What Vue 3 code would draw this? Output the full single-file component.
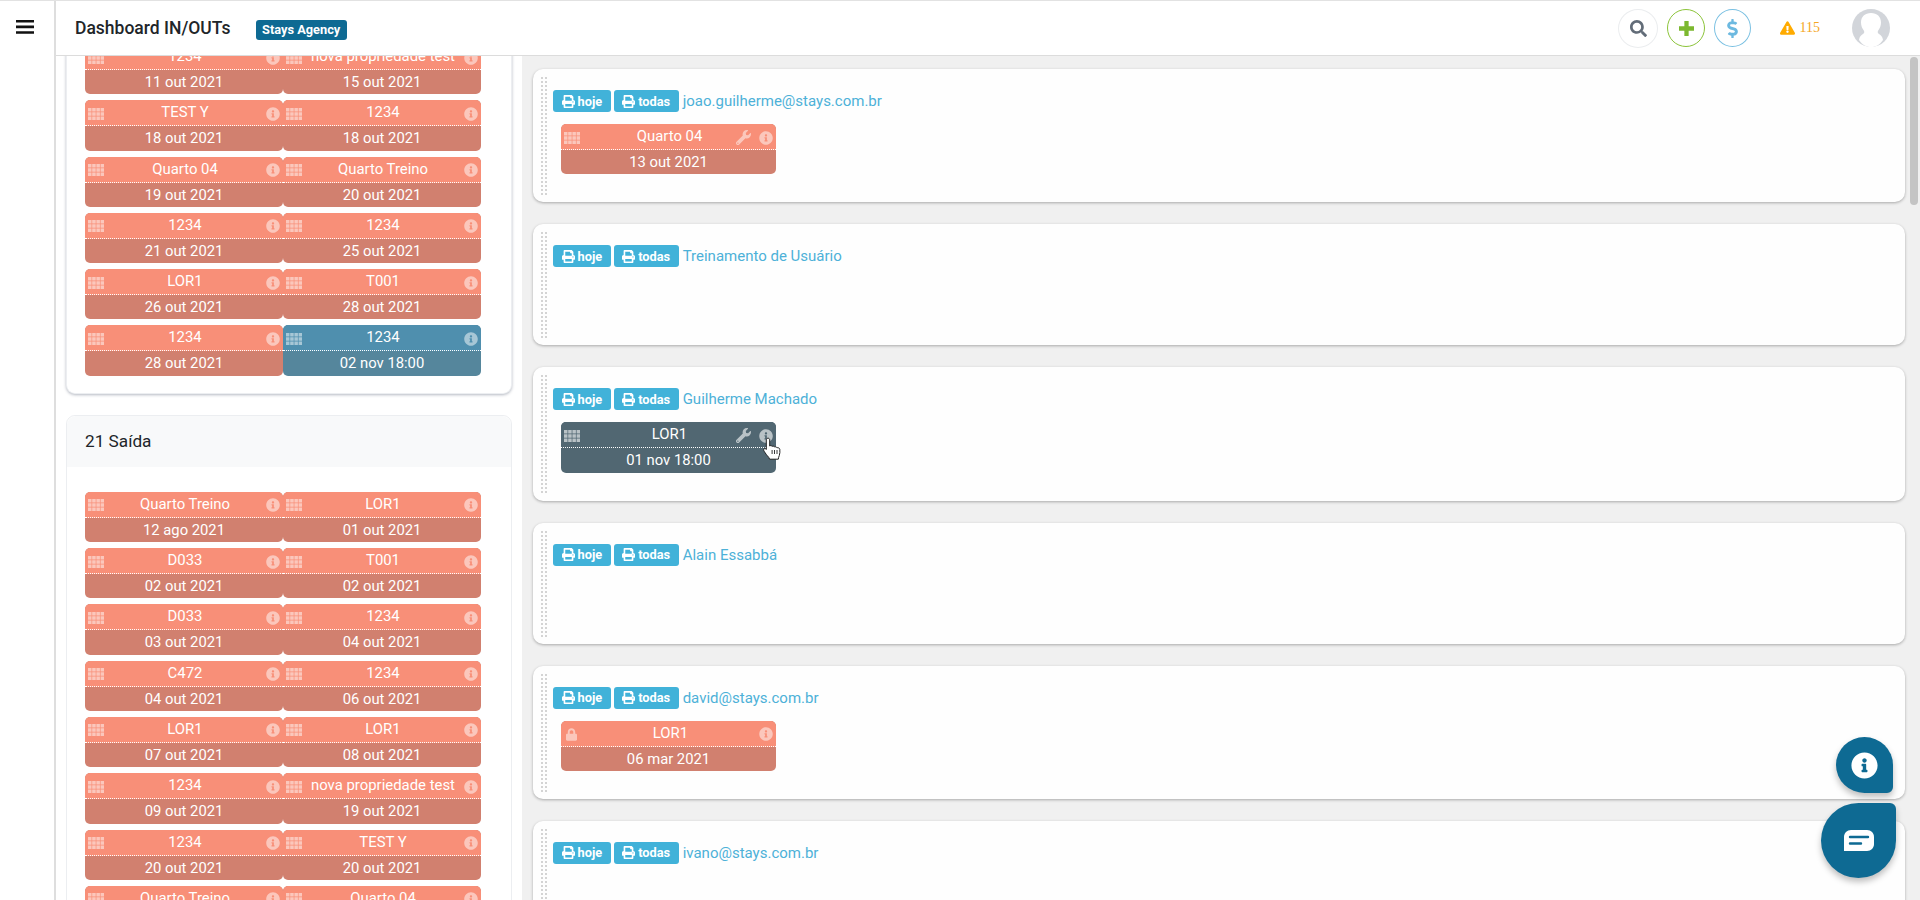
<template>
  <div class="page">
    <svg class="defs" aria-hidden="true">
      <symbol id="i-info" viewBox="0 0 512 512"><path d="M256 8C119.043 8 8 119.083 8 256c0 136.997 111.043 248 248 248s248-111.003 248-248C504 119.083 392.957 8 256 8zm0 110c23.196 0 42 18.804 42 42s-18.804 42-42 42-42-18.804-42-42 18.804-42 42-42zm56 254c0 6.627-5.373 12-12 12h-88c-6.627 0-12-5.373-12-12v-24c0-6.627 5.373-12 12-12h12v-64h-12c-6.627 0-12-5.373-12-12v-24c0-6.627 5.373-12 12-12h64c6.627 0 12 5.373 12 12v100h12c6.627 0 12 5.373 12 12v24z" /></symbol>
      <symbol id="i-print" viewBox="0 0 512 512"><path d="M448 192V77.25c0-8.49-3.37-16.62-9.37-22.63L393.37 9.37c-6-6-14.14-9.37-22.63-9.37H96C78.33 0 64 14.33 64 32v160c-35.35 0-64 28.65-64 64v112c0 8.84 7.16 16 16 16h48v96c0 17.67 14.33 32 32 32h320c17.67 0 32-14.33 32-32v-96h48c8.84 0 16-7.16 16-16V256c0-35.35-28.65-64-64-64zm-64 256H128v-96h256v96zm0-224H128V64h192v48c0 8.84 7.16 16 16 16h48v96zm48 72c-13.25 0-24-10.75-24-24 0-13.26 10.75-24 24-24s24 10.74 24 24c0 13.25-10.75 24-24 24z" /></symbol>
      <symbol id="i-wrench" viewBox="0 0 512 512"><path d="M507.73 109.1c-2.24-9.03-13.54-12.09-20.12-5.51l-74.36 74.36-67.88-11.31-11.31-67.88 74.36-74.36c6.62-6.62 3.43-17.9-5.66-20.16-47.38-11.74-99.55.91-136.58 37.93-39.64 39.64-50.55 97.1-34.05 147.2L18.74 402.76c-24.99 24.99-24.99 65.51 0 90.5 24.99 24.99 65.51 24.99 90.5 0l213.21-213.21c50.12 16.71 107.47 5.68 147.37-34.22 37.07-37.07 49.7-89.32 37.91-136.73zM64 472c-13.25 0-24-10.75-24-24 0-13.26 10.75-24 24-24s24 10.74 24 24c0 13.25-10.75 24-24 24z" /></symbol>
      <symbol id="i-lock" viewBox="0 0 448 512"><path d="M400 224h-24v-72C376 68.2 307.8 0 224 0S72 68.2 72 152v72H48c-26.5 0-48 21.5-48 48v192c0 26.5 21.5 48 48 48h352c26.5 0 48-21.5 48-48V272c0-26.5-21.5-48-48-48zm-104 0H152v-72c0-39.7 32.3-72 72-72s72 32.3 72 72v72z" /></symbol>
      <symbol id="i-grid" viewBox="0 0 16 12"><path d="M0 0h3.500v3.500H0zM4.200 0h3.500v3.500H4.200zM8.400 0h3.500v3.500H8.400zM12.600 0H16v3.500h-3.400zM0 4.200h3.500v3.500H0zM4.200 4.200h3.500v3.500H4.200zM8.400 4.200h3.500v3.500H8.400zM12.600 4.200H16v3.500h-3.400zM0 8.400h3.500V12H0zM4.200 8.400h3.500V12H4.200zM8.400 8.400h3.500V12H8.400zM12.600 8.400H16V12h-3.400z" /></symbol>
    </svg>

    <aside class="sidebar">
      <svg class="bars" viewBox="0 0 18 14"><path d="M0 0h18v2.600H0zM0 5.600h18v2.600H0zM0 11.200h18v2.600H0z" /></svg>
    </aside>

    <div class="main">
      <header class="topbar">
        <h1 class="title">Dashboard IN/OUTs</h1>
        <span class="agency">Stays Agency</span>
        <div class="actions">
          <span class="round round-search">
            <svg viewBox="0 0 512 512" width="17" height="17"><path d="M505 442.7L405.3 343c-4.500-4.500-10.600-7-17-7H372c27.600-35.300 44-79.700 44-128C416 93.100 322.900 0 208 0S0 93.100 0 208s93.100 208 208 208c48.300 0 92.700-16.400 128-44v16.300c0 6.400 2.500 12.500 7 17l99.700 99.700c9.400 9.400 24.600 9.400 33.900 0l28.300-28.300c9.400-9.400 9.400-24.600.1-34zM208 336c-70.700 0-128-57.200-128-128 0-70.700 57.200-128 128-128 70.700 0 128 57.200 128 128 0 70.700-57.200 128-128 128z" /></svg>
          </span>
          <span class="round round-plus">
            <svg viewBox="0 0 14 14" width="15" height="15"><path d="M5 0h4v5h5v4H9v5H5V9H0V5h5z" /></svg>
          </span>
          <span class="round round-dollar">
            <svg viewBox="0 0 288 512" width="11" height="19"><path d="M209.2 233.4l-108-31.600C88.700 198.2 80 186.5 80 173.5c0-16.300 13.200-29.500 29.500-29.500h66.300c12.200 0 24.200 3.700 34.200 10.500 6.100 4.100 14.300 3.100 19.500-2l34.800-34c7.100-6.900 6.100-18.400-1.800-24.500C238 74.800 207.4 64.100 176 64V16c0-8.800-7.200-16-16-16h-32c-8.800 0-16 7.200-16 16v48h-2.500C45.800 64-5.400 118.700.5 183.600c4.200 46.100 39.400 83.600 83.800 96.600l102.500 30c12.500 3.700 21.200 15.300 21.200 28.300 0 16.300-13.200 29.500-29.500 29.500h-66.300C100 368 88 364.300 78 357.500c-6.100-4.100-14.300-3.100-19.500 2l-34.800 34c-7.100 6.900-6.100 18.400 1.800 24.500 24.500 19.200 55.100 29.900 86.500 30v48c0 8.800 7.200 16 16 16h32c8.800 0 16-7.200 16-16v-48.200c46.600-.9 90.300-28.600 105.700-72.700 21.500-61.600-14.600-124.800-72.500-141.700z" /></svg>
          </span>
          <span class="alert">
            <svg viewBox="0 0 576 512" width="15" height="14"><path d="M569.517 440.013C587.975 472.007 564.806 512 527.94 512H48.054c-36.937 0-59.999-40.055-41.577-71.987L246.423 23.985c18.467-32.009 64.72-31.951 83.154 0l239.94 416.028zM288 354c-25.405 0-46 20.595-46 46s20.595 46 46 46 46-20.595 46-46-20.595-46-46-46zm-43.673-165.346l7.418 136c.347 6.364 5.609 11.346 11.982 11.346h48.546c6.373 0 11.635-4.982 11.982-11.346l7.418-136c.375-6.874-5.098-12.654-11.982-12.654h-63.383c-6.884 0-12.356 5.78-11.981 12.654z" /></svg>
            115
          </span>
          <svg class="avatar" viewBox="0 0 38 38">
            <circle cx="19" cy="19" r="19" fill="#d2d5da" />
            <path d="M19 4c-6 0-10 3.800-10 9.500 0 3.300 1.200 6 2.800 8 .8 1.100.6 2.800-.8 3.500C9 26.300 7.500 27.500 7 31c3 4.500 7 7 12 7s9-2.500 12-7c-.5-3.500-2-4.700-4-6-1.400-.7-1.600-2.400-.8-3.500 1.600-2 2.800-4.700 2.800-8C29 7.800 25 4 19 4z" fill="#fff" />
          </svg>
        </div>
      </header>

      <div class="content">
        <section class="left">
          <div class="panel panel-in">
            <div class="panel-body">
              <div v-for="(row, i) in inRows" :key="i" class="pair">
                <div v-for="(b, j) in row" :key="j" class="item" :class="b.kind">
                  <div class="item-top">
                    <svg class="ic-grid"><use href="#i-grid" /></svg>
                    <span class="item-name">{{ b.name }}</span>
                    <svg class="ic-info"><use href="#i-info" /></svg>
                  </div>
                  <div class="item-date">{{ b.date }}</div>
                </div>
              </div>
            </div>
          </div>

          <div class="panel panel-out">
            <div class="panel-head">21 Saída</div>
            <div class="panel-body">
              <div v-for="(row, i) in outRows" :key="i" class="pair">
                <div v-for="(b, j) in row" :key="j" class="item">
                  <div class="item-top">
                    <svg class="ic-grid"><use href="#i-grid" /></svg>
                    <span class="item-name">{{ b.name }}</span>
                    <svg class="ic-info"><use href="#i-info" /></svg>
                  </div>
                  <div class="item-date">{{ b.date }}</div>
                </div>
              </div>
            </div>
          </div>
        </section>

        <section class="right">
          <div v-for="u in users" :key="u.name" class="user-card">
            <div class="handle"></div>
            <div class="user-body">
              <div class="user-head">
                <button class="print-btn"><svg><use href="#i-print" /></svg>hoje</button>
                <button class="print-btn"><svg><use href="#i-print" /></svg>todas</button>
                <a class="user-name">{{ u.name }}</a>
              </div>
              <div v-if="u.item" class="item single" :class="u.item.kind">
                <div class="item-top">
                  <svg v-if="u.item.locked" class="ic-lock"><use href="#i-lock" /></svg>
                  <svg v-else class="ic-grid"><use href="#i-grid" /></svg>
                  <span class="item-name">{{ u.item.name }}</span>
                  <svg v-if="!u.item.locked" class="ic-wrench"><use href="#i-wrench" /></svg>
                  <svg class="ic-info"><use href="#i-info" /></svg>
                </div>
                <div class="item-date">{{ u.item.date }}</div>
                <svg v-if="u.item.kind === 'dark'" class="cursor" viewBox="0 0 18 23">
                  <path d="M5 1.200c1 0 1.700.8 1.700 1.800v6c.4-.5 1.900-.6 2.400.4.600-.5 2-.4 2.400.6.700-.4 2.100-.2 2.500.8.700-.3 2.500-.1 2.800 1.500.3 2 .1 4.500-.5 6.200-.4 1.300-1 2.300-1 3.700H6.600c-.3-1.400-1.300-2.400-2.300-3.500-1.200-1.400-3.300-4.400-3.600-5.400-.4-1.200.9-2.300 2.100-1.400l.5.500V3c0-1 .7-1.800 1.700-1.800z" fill="#fff" stroke="#222" stroke-width="1" />
                  <path d="M9.100 13v4M11.500 13v4M14 13v4" stroke="#222" stroke-width=".9" fill="none" />
                </svg>
              </div>
            </div>
          </div>
          <div class="scrollbar"></div>
        </section>
      </div>
    </div>

    <button class="fab fab-info">
      <svg width="27" height="27" fill="#fff"><use href="#i-info" /></svg>
    </button>
    <button class="fab fab-chat">
      <svg viewBox="0 0 30 22" width="30" height="22">
        <path d="M7 0h16c4 0 7 3 7 7v7c0 4-3 7-7 7H0V7c0-4 3-7 7-7z" fill="#fff" />
        <path d="M6 7h18M6 13.500h11" stroke="#0e6a93" stroke-width="2.400" stroke-linecap="round" />
      </svg>
    </button>
  </div>
</template>

<script setup>
const pairRows = list => list.map(([a, ad, b, bd]) => [{ name: a, date: ad }, { name: b, date: bd }])

const inRows = pairRows([
  ['1234', '11 out 2021', 'nova propriedade test', '15 out 2021'],
  ['TEST Y', '18 out 2021', '1234', '18 out 2021'],
  ['Quarto 04', '19 out 2021', 'Quarto Treino', '20 out 2021'],
  ['1234', '21 out 2021', '1234', '25 out 2021'],
  ['LOR1', '26 out 2021', 'T001', '28 out 2021'],
  ['1234', '28 out 2021', '1234', '02 nov 18:00']
])
inRows[5][1].kind = 'blue'

const outRows = pairRows([
  ['Quarto Treino', '12 ago 2021', 'LOR1', '01 out 2021'],
  ['D033', '02 out 2021', 'T001', '02 out 2021'],
  ['D033', '03 out 2021', '1234', '04 out 2021'],
  ['C472', '04 out 2021', '1234', '06 out 2021'],
  ['LOR1', '07 out 2021', 'LOR1', '08 out 2021'],
  ['1234', '09 out 2021', 'nova propriedade test', '19 out 2021'],
  ['1234', '20 out 2021', 'TEST Y', '20 out 2021'],
  ['Quarto Treino', '21 out 2021', 'Quarto 04', '22 out 2021']
])

const users = [
  { name: 'joao.guilherme@stays.com.br', item: { name: 'Quarto 04', date: '13 out 2021' } },
  { name: 'Treinamento de Usuário' },
  { name: 'Guilherme Machado', item: { name: 'LOR1', date: '01 nov 18:00', kind: 'dark' } },
  { name: 'Alain Essabbá' },
  { name: 'david@stays.com.br', item: { name: 'LOR1', date: '06 mar 2021', locked: true } },
  { name: 'ivano@stays.com.br' }
]
</script>

<style>
html, body {
  margin: 0;
  height: 100%;
  overflow: hidden;
  background: #fff;
}
</style>

<style scoped>
.page {
  display: flex;
  height: 900px;
  overflow: hidden;
  font-family: Roboto, "Liberation Sans", sans-serif;
  border-top: 1px solid #e2e2e2;
  box-sizing: border-box;
}

.defs {
  position: absolute;
  width: 0;
  height: 0;
}

.sidebar {
  width: 54px;
  flex: none;
  border-right: 2px solid #dedede;
  background: #fff;
}

.bars {
  display: block;
  width: 18px;
  height: 14px;
  margin: 19px 0 0 16px;
  fill: #111;
}

.main {
  flex: 1;
  min-width: 0;
  display: flex;
  flex-direction: column;
}

.topbar {
  height: 55px;
  flex: none;
  display: flex;
  align-items: center;
  padding-left: 19px;
  border-bottom: 1px solid #dcdcdc;
  background: #fff;
  box-sizing: border-box;
  position: relative;
  z-index: 2;
}

.title {
  margin: 0;
  font-size: 17.5px;
  font-weight: 500;
  color: #212529;
}

.agency {
  margin: 3px 0 0 25px;
  padding: 0 6.5px;
  height: 20px;
  line-height: 20px;
  border-radius: 3px;
  background: #0e6a93;
  color: #fff;
  font-size: 12.8px;
  font-weight: 700;
}

.actions {
  margin-left: auto;
  display: flex;
  align-items: center;
  padding-right: 30px;
}

.round {
  width: 38px;
  height: 38px;
  box-sizing: border-box;
  border-radius: 50%;
  display: flex;
  align-items: center;
  justify-content: center;
  margin-right: 9px;
  background: #fff;
}

.round-search {
  width: 40px;
  height: 39px;
  border: 1px solid #ebedef;
  fill: #626c78;
}

.round-plus {
  border: 1px solid #8cc43a;
  fill: #7cb82f;
}

.round-dollar {
  border: 1px solid #7ac0e2;
  fill: #6cb9e0;
  margin-right: 0;
  width: 37px;
}

.alert {
  margin-left: 28.5px;
  display: flex;
  align-items: center;
  gap: 5px;
  font-family: "Liberation Serif", serif;
  font-size: 14px;
  color: #f5a623;
  fill: #ffab00;
}

.avatar {
  width: 38px;
  height: 38px;
  margin-left: 32px;
}

.content {
  flex: 1;
  min-height: 0;
  display: flex;
  overflow: hidden;
}

.left {
  width: 466px;
  flex: none;
  box-sizing: border-box;
  padding: 0 10px;
  background: #fff;
}

.panel {
  border: 1px solid #eceef1;
  border-radius: 9px;
  margin-bottom: 21px;
  background: #fff;
}

.panel-in {
  margin-top: -30px;
  border-top: 0;
  box-shadow: 0 1px 3px rgba(90, 100, 120, .45);
}

.panel-in .panel-body {
  padding: 18px 30px 11px 18px;
}

.panel-head {
  height: 51px;
  padding-left: 18px;
  line-height: 51px;
  font-size: 17.2px;
  color: #212529;
  background: #f8f9fa;
  border-radius: 9px 9px 0 0;
}

.panel-out .panel-body {
  padding: 25px 30px 0 18px;
}

.pair {
  display: flex;
  margin-bottom: 6px;
}

.item {
  flex: 1;
  min-width: 0;
  height: 50.3px;
  border-radius: 5px;
  overflow: hidden;
  color: #fff;
  text-align: center;
  background: #d1806f;
  --top: #f88f78;
}

.item.blue {
  background: #55869c;
  --top: #4f8fae;
}

.item.dark {
  background: #516772;
  --top: #516772;
  overflow: visible;
}

.item-top {
  height: 26px;
  box-sizing: border-box;
  display: flex;
  align-items: center;
  padding: 0 3px;
  background: var(--top);
  border-bottom: 1px dotted #fff;
  border-radius: 5px 5px 0 0;
}

.item-name {
  flex: 1;
  min-width: 0;
  white-space: nowrap;
  line-height: 24px;
  margin-top: -1px;
  font-size: 14.9px;
}

.item-date {
  line-height: 24px;
  font-size: 14.8px;
  font-weight: 450;
}

.ic-grid,
.ic-info,
.ic-wrench,
.ic-lock {
  flex: none;
  fill: #fff;
  opacity: .5;
}

.ic-grid {
  width: 16px;
  height: 12px;
  margin-top: 2px;
}

.ic-info {
  width: 14px;
  height: 14px;
  margin-top: 2px;
}

.ic-wrench {
  width: 15px;
  height: 15px;
  margin-right: 8px;
  margin-left: -23px;
  margin-top: 2px;
}

.ic-lock {
  width: 11px;
  height: 13px;
  margin: 2px 5px 0 2px;
}

.item.dark .ic-grid,
.item.dark .ic-wrench,
.item.dark .ic-info {
  opacity: .6;
}

.right {
  flex: 1;
  min-width: 0;
  position: relative;
  padding: 13px 15px 0 11px;
  background: #f0f0f0;
}

.user-card {
  display: flex;
  box-sizing: border-box;
  min-height: 121px;
  margin-bottom: 22px;
  padding: 7px 0 7px 7px;
  border-radius: 10px;
  background: #fefefe;
  box-shadow: 0 1px 3px rgba(0, 0, 0, .3);
}

.handle {
  width: 8px;
  flex: none;
  background-image: radial-gradient(circle, #d4d4d4 1.4px, transparent 1.5px);
  background-size: 4px 4px;
}

.user-body {
  margin-left: 5px;
  padding: 14px 0 21px;
}

.user-head {
  display: flex;
  align-items: center;
  height: 22px;
}

.print-btn {
  display: flex;
  align-items: center;
  justify-content: center;
  gap: 3px;
  height: 22px;
  padding: 0 8.5px;
  margin-right: 3px;
  border: 0;
  border-radius: 3px;
  background: #41b2d9;
  color: #fff;
  font-family: Roboto, "Liberation Sans", sans-serif;
  font-size: 12.8px;
  font-weight: 700;
}

.print-btn svg {
  width: 13px;
  height: 13px;
  fill: #fff;
}

.user-name {
  margin-left: 1px;
  font-size: 15px;
  color: #4db1d8;
}

.item.single {
  flex: none;
  width: 215px;
  margin: 12px 0 0 8px;
  position: relative;
}

.cursor {
  position: absolute;
  left: 202px;
  top: 15px;
  width: 18px;
  height: 23px;
}

.scrollbar {
  position: absolute;
  top: 1px;
  right: 2px;
  width: 8px;
  height: 148px;
  border-radius: 4px;
  background: #c4c4c4;
}

.fab {
  position: fixed;
  display: flex;
  align-items: center;
  justify-content: center;
  padding: 0;
  border: 0;
  background: #0e6a93;
  box-shadow: 0 4px 6px rgba(0, 0, 0, .25);
}

.fab-info {
  left: 1836px;
  top: 737px;
  width: 57px;
  height: 56px;
  border-radius: 50% 50% 6px 50%;
}

.fab-chat {
  left: 1821px;
  top: 803px;
  width: 75px;
  height: 75px;
  border-radius: 50% 6px 50% 50%;
}
</style>
